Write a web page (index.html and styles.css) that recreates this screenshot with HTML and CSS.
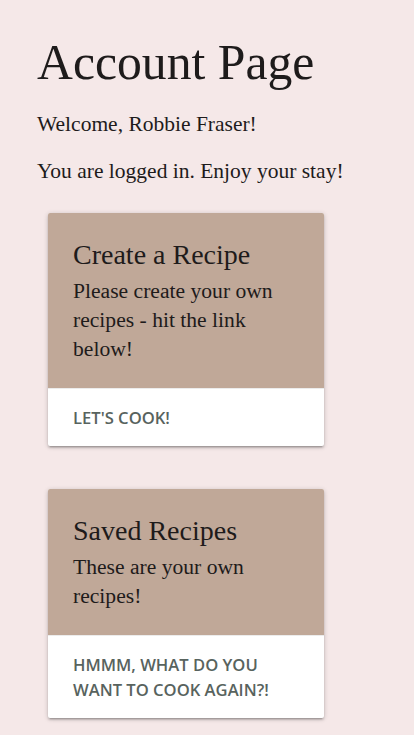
FILE: index.html
```html
<!DOCTYPE html>
<html lang="en">
<head>
<meta charset="utf-8">
<title>Account Page</title>
<link rel="stylesheet" href="styles.css">
</head>
<body>
<main class="page">
  <h1 class="title">Account Page</h1>
  <p class="lead">Welcome, Robbie Fraser!</p>
  <p class="lead">You are logged in. Enjoy your stay!</p>
  <section class="cards">
    <article class="card">
      <div class="card-content">
        <h2 class="card-title">Create a Recipe</h2>
        <p class="card-text">Please create your own recipes - hit the link below!</p>
      </div>
      <div class="card-action"><a href="#">Let's Cook!</a></div>
    </article>
    <article class="card">
      <div class="card-content">
        <h2 class="card-title">Saved Recipes</h2>
        <p class="card-text">These are your own recipes!</p>
      </div>
      <div class="card-action"><a href="#">Hmmm, what do you want to cook again?!</a></div>
    </article>
  </section>
</main>
</body>
</html>
```

FILE: styles.css
```css
html, body {
  margin: 0;
  padding: 0;
  background: #f5e8e8;
  color: #1e1b1b;
  font-family: "Liberation Serif", "DejaVu Serif", serif;
}
.page {
  padding: 36px 20px 20px 37px;
}
.title {
  margin: 0 0 18px;
  font-size: 49.7px;
  font-weight: 400;
  line-height: 1.1;
}
.lead {
  margin: 0 0 17px;
  font-size: 21.5px;
  line-height: 30px;
}
.cards {
  display: flex;
  flex-direction: column;
  gap: 43px;
  padding-left: 11px;
  margin-top: 27px;
}
.card {
  width: 276px;
  background: #fff;
  border-radius: 2px;
  box-shadow: 0 2px 2px 0 rgba(0,0,0,0.14), 0 3px 1px -2px rgba(0,0,0,0.12), 0 1px 5px 0 rgba(0,0,0,0.2);
  overflow: hidden;
}
.card-content {
  background: #c0a898;
  padding: 26px 25px 24px;
}
.card-title {
  margin: 0 0 6px;
  font-size: 28px;
  font-weight: 400;
  line-height: 32px;
}
.card-text {
  margin: 0;
  font-size: 21.6px;
  line-height: 29px;
}
.card-action {
  padding: 16px 25px;
  border-top: 1px solid rgba(160,160,160,0.2);
}
.card-action a {
  font-family: "Open Sans", "Noto Sans", sans-serif;
  font-weight: 600;
  font-size: 16.6px;
  line-height: 25px;
  text-transform: uppercase;
  color: #58635e;
  text-decoration: none;
}
```
